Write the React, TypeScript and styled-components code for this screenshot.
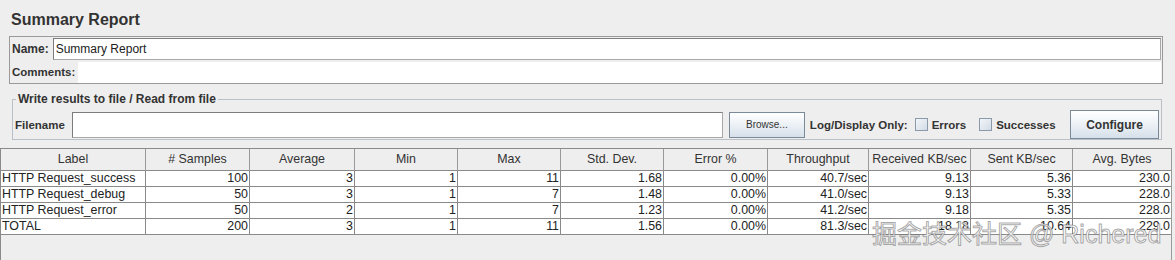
import React from "react";
import styled, { createGlobalStyle } from "styled-components";

const GlobalStyle = createGlobalStyle`
  html, body {
    margin: 0;
    padding: 0;
    background: #eeeeee;
    overflow: hidden;
  }
  body {
    font-family: "Liberation Sans", Arial, sans-serif;
    color: #222;
  }
`;

const columns = [
  { title: "Label", width: 145 },
  { title: "# Samples", width: 104 },
  { title: "Average", width: 105 },
  { title: "Min", width: 103 },
  { title: "Max", width: 103 },
  { title: "Std. Dev.", width: 103 },
  { title: "Error %", width: 104 },
  { title: "Throughput", width: 101 },
  { title: "Received KB/sec", width: 102 },
  { title: "Sent KB/sec", width: 102 },
  { title: "Avg. Bytes", width: 98 },
];

const rows = [
  ["HTTP Request_success", "100", "3", "1", "11", "1.68", "0.00%", "40.7/sec", "9.13", "5.36", "230.0"],
  ["HTTP Request_debug", "50", "3", "1", "7", "1.48", "0.00%", "41.0/sec", "9.13", "5.33", "228.0"],
  ["HTTP Request_error", "50", "2", "1", "7", "1.23", "0.00%", "41.2/sec", "9.18", "5.35", "228.0"],
  ["TOTAL", "200", "3", "1", "11", "1.56", "0.00%", "81.3/sec", "18.18", "10.64", "229.0"],
];

const gridTemplate = columns.map((c) => `${c.width}px`).join(" ");

const App: React.FC = () => {
  return (
    <Page>
      <GlobalStyle />
      <Title>Summary Report</Title>

      <NamePanel>
        <FieldRow $height={24}>
          <FieldLabel>Name:</FieldLabel>
          <NameInput value="Summary Report" readOnly />
        </FieldRow>
        <FieldRow $height={22}>
          <FieldLabel $narrow>Comments:</FieldLabel>
          <CommentsArea />
        </FieldRow>
      </NamePanel>

      <FilePanel>
        <Legend>Write results to file / Read from file</Legend>
        <ToolRow>
          <FieldLabel $narrow>Filename</FieldLabel>
          <FileInput readOnly />
          <Button $small>Browse...</Button>
          <FieldLabel $narrow>Log/Display Only:</FieldLabel>
          <CheckLabel>
            <CheckBox />
            Errors
          </CheckLabel>
          <CheckLabel>
            <CheckBox />
            Successes
          </CheckLabel>
          <Button>Configure</Button>
        </ToolRow>
      </FilePanel>

      <TablePane>
        <HeaderRow>
          {columns.map((c, i) => (
            <HeaderCell key={c.title} $last={i === columns.length - 1}>
              {c.title}
            </HeaderCell>
          ))}
        </HeaderRow>
        {rows.map((r) => (
          <DataRow key={r[0]}>
            {r.map((v, i) => (
              <Cell key={i} $left={i === 0} $last={i === r.length - 1}>
                {v}
              </Cell>
            ))}
          </DataRow>
        ))}
      </TablePane>

      <Watermark>掘金技术社区 @ Richered</Watermark>
    </Page>
  );
};

export default App;

// styles

const Page = styled.div`
  position: relative;
  width: 1175px;
  height: 260px;
  overflow: hidden;
`;

const Title = styled.div`
  padding: 10px 0 0 11px;
  font-size: 16px;
  line-height: 20px;
  font-weight: bold;
  color: #333;
  margin-bottom: 6px;
`;

const NamePanel = styled.div`
  box-sizing: border-box;
  width: 1154px;
  margin-left: 9px;
  padding: 0 1px 0 2px;
  border: 1px solid #9a9a9a;
`;

const FieldRow = styled.div<{ $height: number }>`
  display: flex;
  align-items: center;
  gap: 3px;
  height: ${(p) => p.$height}px;
`;

const FieldLabel = styled.span<{ $narrow?: boolean }>`
  font-size: ${(p) => (p.$narrow ? 11.5 : 12)}px;
  font-weight: bold;
  color: #333;
  white-space: nowrap;
`;

const NameInput = styled.input`
  box-sizing: border-box;
  flex: 1;
  height: 22px;
  margin: 0 0 0 1px;
  padding: 0 2px;
  border: 1px solid #a8a8a8;
  border-top-color: #7d7d7d;
  border-left-color: #7d7d7d;
  background: #fff;
  font-family: "Liberation Sans", Arial, sans-serif;
  font-size: 12px;
  color: #222;
  outline: none;
`;

const CommentsArea = styled.div`
  flex: 1;
  height: 21px;
  margin-top: 1px;
  background: #fff;
`;

const FilePanel = styled.fieldset`
  box-sizing: border-box;
  width: 1150px;
  min-width: 0;
  margin: 8px 0 0 12px;
  padding: 4px 2px 0 2px;
  border: 1px solid #b9c0c8;
`;

const Legend = styled.legend`
  margin-left: 1px;
  padding: 0 2px;
  font-size: 12px;
  line-height: 14px;
  font-weight: bold;
  color: #333;
`;

const ToolRow = styled.div`
  display: flex;
  align-items: center;
  height: 29px;
  gap: 6px;
`;

const FileInput = styled.input`
  box-sizing: border-box;
  width: 651px;
  height: 26px;
  margin: 0 0 0 1px;
  border: 1px solid #a8a8a8;
  border-top-color: #7d7d7d;
  border-left-color: #7d7d7d;
  background: #fff;
  outline: none;
`;

const Button = styled.button<{ $small?: boolean }>`
  box-sizing: border-box;
  width: ${(p) => (p.$small ? 76 : 89)}px;
  height: ${(p) => (p.$small ? 26 : 29)}px;
  margin: ${(p) => (p.$small ? "0 -1px 0 0" : "0 0 0 auto")};
  padding: 0;
  border: 1px solid #7a8a99;
  border-radius: 0;
  background: linear-gradient(#ffffff, #f0f4f8 40%, #d6e0ea);
  font-family: "Liberation Sans", Arial, sans-serif;
  font-size: ${(p) => (p.$small ? 10 : 12)}px;
  font-weight: ${(p) => (p.$small ? "normal" : "bold")};
  color: #333;
`;

const CheckLabel = styled.span`
  display: flex;
  align-items: center;
  gap: 4px;
  margin-left: 1px;
  margin-right: 6px;
  font-size: 11.5px;
  font-weight: bold;
  color: #333;
`;

const CheckBox = styled.span`
  box-sizing: border-box;
  width: 13px;
  height: 13px;
  border: 1px solid #8b9aab;
  background: linear-gradient(135deg, #f2f5f8, #d3dce6);
`;

const TablePane = styled.div`
  box-sizing: border-box;
  width: 1172px;
  height: 130px;
  margin-top: 8px;
  border: 1px solid #8a8a8a;
  border-right-color: #9a9a9a;
`;

const HeaderRow = styled.div`
  display: grid;
  grid-template-columns: ${gridTemplate};
  height: 22px;
  background: #eeeeee;
`;

const HeaderCell = styled.div<{ $last?: boolean }>`
  box-sizing: border-box;
  border-right: ${(p) => (p.$last ? "none" : "1px solid #9a9a9a")};
  border-bottom: 1px solid #8a8a8a;
  font-size: 12.4px;
  line-height: 21px;
  text-align: center;
  color: #333;
  white-space: nowrap;
  overflow: hidden;
`;

const DataRow = styled.div`
  display: grid;
  grid-template-columns: ${gridTemplate};
  height: 16px;
  background: #fff;
`;

const Cell = styled.div<{ $left?: boolean; $last?: boolean }>`
  box-sizing: border-box;
  padding: 0 1px;
  border-right: ${(p) => (p.$last ? "none" : "1px solid #8a8a8a")};
  border-bottom: 1px solid #8a8a8a;
  font-size: 12.4px;
  line-height: 15px;
  text-align: ${(p) => (p.$left ? "left" : "right")};
  color: #222;
  white-space: nowrap;
  overflow: hidden;
`;

const Watermark = styled.div`
  position: absolute;
  left: 872px;
  top: 222px;
  font-family: "Liberation Sans", "Noto Sans CJK SC", sans-serif;
  font-size: 25px;
  line-height: 25px;
  white-space: nowrap;
  color: rgba(255, 255, 255, 0.92);
  -webkit-text-stroke: 1px rgba(95, 95, 95, 0.55);
  pointer-events: none;
`;
